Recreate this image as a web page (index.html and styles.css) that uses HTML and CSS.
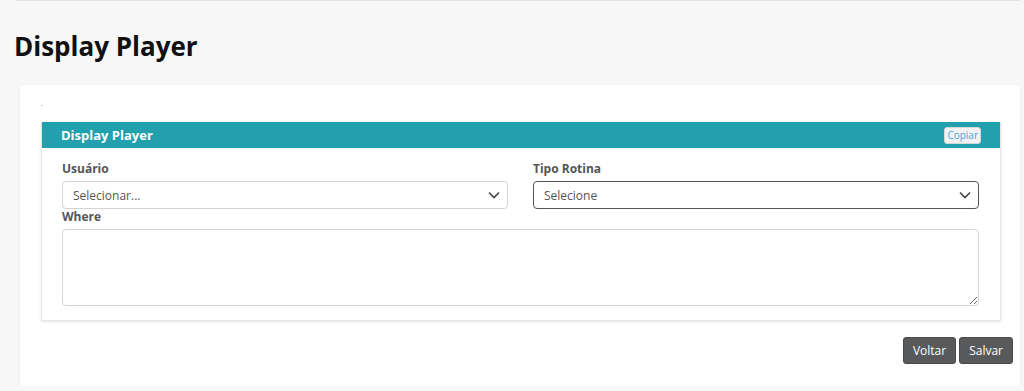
FILE: index.html
```html
<!DOCTYPE html>
<html lang="pt-BR">
<head>
    <meta charset="UTF-8">
    <meta name="viewport" content="width=device-width, initial-scale=1.0">
    <title>Display Player</title>
    <link rel="stylesheet" href="styles.css">
</head>
<body>
    <div class="topbar"></div>

    <h1 class="page-title">Display Player</h1>

    <div class="card">
        <div class="crumb">-</div>

        <div class="panel">
            <div class="panel-heading">
                <span>Display Player</span>
                <button type="button" class="copy-btn">Copiar</button>
            </div>
            <div class="panel-body">
                <div class="row">
                    <div class="field">
                        <label>Usuário</label>
                        <div class="select">
                            <span>Selecionar...</span>
                            <svg width="14" height="14" viewBox="0 0 14 14"><path d="M2 4.5l5 5 5-5" fill="none" stroke="#444" stroke-width="1.6"/></svg>
                        </div>
                    </div>
                    <div class="field">
                        <label>Tipo Rotina</label>
                        <div class="select select-active">
                            <span>Selecione</span>
                            <svg width="14" height="14" viewBox="0 0 14 14"><path d="M2 4.5l5 5 5-5" fill="none" stroke="#444" stroke-width="1.6"/></svg>
                        </div>
                    </div>
                </div>
                <div class="field">
                    <label>Where</label>
                    <textarea></textarea>
                </div>
            </div>
        </div>

        <div class="actions">
            <button type="button" class="btn">Voltar</button>
            <button type="button" class="btn">Salvar</button>
        </div>
    </div>
</body>
</html>
```

FILE: styles.css
```css
body {
    font-family: "Open Sans", Arial, sans-serif;
    margin: 0;
    padding: 0 4px 0 0;
    background: #f7f7f7;
    color: #333;
}
.topbar {
    height: 1px;
    margin-left: 16px;
    background: #e2e2e2;
}
.page-title {
    font-size: 26px;
    font-weight: 700;
    color: #111;
    margin: 28px 0 0 14px;
    line-height: 34px;
}
.card {
    margin: 22px 0 0 20px;
    background: #fff;
    padding: 15px 19px 22px 21px;
    box-shadow: 0 1px 3px rgba(0, 0, 0, 0.08);
}
.crumb {
    font-size: 7px;
    color: #999;
    line-height: 10px;
    height: 22px;
}
.panel {
    border: 1px solid #e6e6e6;
    border-top: none;
    box-shadow: 0 1px 3px rgba(0, 0, 0, 0.1);
}
.panel-heading {
    background: #23a0ae;
    color: #fff;
    height: 26px;
    display: flex;
    align-items: center;
    justify-content: space-between;
    padding: 0 19px 0 19px;
    font-size: 13px;
    font-weight: 700;
}
.copy-btn {
    font-family: inherit;
    font-size: 10px;
    color: #4ea8dc;
    background: #f2f2f2;
    border: 1px solid #d8d8d8;
    border-radius: 3px;
    padding: 1px 2px;
    line-height: 13px;
}
.panel-body {
    padding: 13px 21px 14px 20px;
}
.row {
    display: grid;
    grid-template-columns: 1fr 1fr;
    gap: 25px;
}
.field label {
    display: block;
    font-size: 12px;
    font-weight: 700;
    color: #555;
    line-height: 16px;
    margin-bottom: 4px;
}
.select {
    height: 28px;
    box-sizing: border-box;
    border: 1px solid #d4d4d4;
    border-radius: 4px;
    display: flex;
    align-items: center;
    justify-content: space-between;
    padding: 0 6px 0 10px;
    font-size: 12px;
    color: #555;
}
.select-active {
    border: 1px solid #555;
}
textarea {
    display: block;
    width: 100%;
    box-sizing: border-box;
    height: 77px;
    border: 1px solid #d4d4d4;
    border-radius: 4px;
}
.actions {
    display: flex;
    justify-content: flex-end;
    gap: 3px;
    margin: 16px -12px 0 0;
}
.btn {
    font-family: inherit;
    font-size: 12px;
    color: #fff;
    background: #58595b;
    border: 1px solid #4a4a4a;
    border-radius: 3px;
    height: 27px;
    padding: 0 9px;
}
```
